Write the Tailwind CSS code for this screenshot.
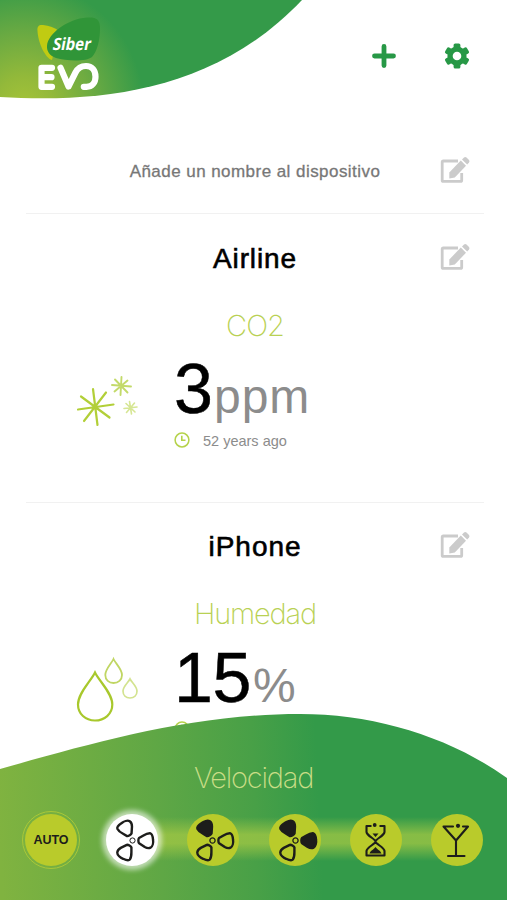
<!DOCTYPE html>
<html lang="es">
<head>
<meta charset="utf-8">
<meta name="viewport" content="width=device-width, initial-scale=1">
<title>Siber EVO</title>
<script src="https://cdn.jsdelivr.net/npm/@tailwindcss/browser@4"></script>
</head>
<body class="bg-white">
<svg class="hidden">
  <defs>
    <symbol id="edit" viewBox="0 0 30 28">
      <path d="M18 5H3.300Q2.200 5 2.200 6.200V24.200Q2.200 25.400 3.300 25.400H20.500Q21.700 25.400 21.700 24.200V17" fill="none" stroke="currentColor" stroke-width="2.800"/>
      <path d="M9.300 16.500L20.800 4.600L26 9.700L14.800 21.500L9.300 22.500Z" fill="currentColor"/>
      <path d="M22 3.400L24 1.500Q25.200.4 26.500 1.500L29 4Q30 5.300 29 6.500L27.200 8.500Z" fill="currentColor"/>
    </symbol>
    <symbol id="clock" viewBox="0 0 16 16">
      <circle cx="8" cy="8" r="6.900" fill="none" stroke="#b5d24a" stroke-width="1.500"/>
      <path d="M7.800 3.800V8.300H11.500" fill="none" stroke="#b5d24a" stroke-width="1.600"/>
    </symbol>
    <path id="blade" d="M6.500-2.500C5.600-1.500 5.700 1.800 6.600 2.700L12.300 6.500C14 7.500 16.300 8 18 7.200C20.200 6 21 2 20.500-1C20.300-3.500 19.700-6.800 17.800-7.200C15.300-7.400 12.500-6 10.500-4.800Z" stroke="#1d1d1b" stroke-width="2.400" stroke-linejoin="round"/>
  </defs>
</svg>
<div class="relative w-[507px] h-[900px] overflow-hidden bg-white font-['Liberation_Sans',Arial,sans-serif]">
  <header class="relative flex h-[127px] items-start">
    <svg class="absolute left-0 top-0" width="310" height="100" viewBox="0 0 310 100">
      <defs>
        <radialGradient id="hg" gradientUnits="userSpaceOnUse" cx="0" cy="0" r="1" gradientTransform="translate(24 108) scale(120 125)">
          <stop offset="0" stop-color="#a6c438"/><stop offset=".25" stop-color="#93b93a"/><stop offset=".6" stop-color="#6aaa42"/><stop offset="1" stop-color="#349a49"/>
        </radialGradient>
      </defs>
      <path d="M0 0H302C215 92 100 103 0 97Z" fill="url(#hg)"/>
    </svg>
    <svg class="relative ml-[34px] mt-[14px]" width="70" height="80" viewBox="34 14 70 80" role="img" aria-label="Siber EVO">
      <path d="M37.500 31C37 26 39 24.500 43 25C49 25.500 55 28 59 31L52 60C45 58 38 42 37.500 31Z" fill="#c0cb12"/>
      <path d="M47 46C48 33 68 19 87 17.500C96 17 100 19 100 28C100 40 97 52 92 57C86 62 66 61 56 58C50 56 46.500 51 47 46Z" fill="#309538"/>
      <text transform="translate(52 50.300) skewX(-11)" textLength="38" lengthAdjust="spacingAndGlyphs" fill="#fff" font-family="Open Sans" font-weight="700" font-size="17">Siber</text>
      <g fill="none" stroke="#fff" stroke-width="6.200" stroke-linecap="round" stroke-linejoin="round">
        <path d="M52 67.800H41.500V86.800H52M41.500 77.200H51.500"/>
        <path d="M60.500 67.800L68.500 86.500L75.500 72.500C78 67.500 82 66 86 66C92 66 95.500 70.500 95.500 76.700C95.500 82.700 92 86.800 86.500 86.800H83.800"/>
      </g>
    </svg>
    <div class="ml-[267px] mt-[43px] flex items-center gap-[47px] text-[#279846]">
      <svg width="26" height="26" viewBox="0 0 26 26"><path d="M13 3.500V22.500M3.500 13H22.500" stroke="currentColor" stroke-width="4.800" stroke-linecap="round"/></svg>
      <svg width="26" height="26" viewBox="-13 -13 26 26"><g fill="currentColor"><circle r="9.600"/><g id="t"><rect x="-3.400" y="-12.600" width="6.800" height="25.200" rx="1.600"/></g><use href="#t" transform="rotate(60)"/><use href="#t" transform="rotate(120)"/></g><circle r="4.300" fill="#fff"/></svg>
    </div>
  </header>

  <main class="pl-[26px] pr-[23px]">
    <section class="relative flex h-[87px] items-center justify-center border-b border-[#f1f1f1]">
      <p class="pt-[3px] text-[17px] leading-[20px] tracking-[0.450px] text-[#777] [-webkit-text-stroke:0.300px_#777]">Añade un nombre al dispositivo</p>
      <svg class="absolute right-[14px] top-[29px] text-[#cbcbcb]" width="30" height="28"><use href="#edit"/></svg>
    </section>

    <section class="relative h-[289px] border-b border-[#f1f1f1]">
      <h2 class="pt-[29px] text-center text-[28px] leading-[32px] tracking-[0.900px] text-black [-webkit-text-stroke:0.600px_#000]">Airline</h2>
      <svg class="absolute right-[14px] top-[29px] text-[#cbcbcb]" width="30" height="28"><use href="#edit"/></svg>
      <p class="mt-[33px] text-center font-['Inter'] text-[29px] leading-[36px] font-[200] tracking-[-1px] text-[#b9d154]">CO2</p>
      <div class="flex pl-[46px]">
        <svg class="mt-[24px] shrink-0" width="70" height="60" viewBox="72 368 70 60" fill="none" stroke-linecap="round">
          <g stroke="#b2cf38" stroke-width="2.200"><path d="M93 389L97.500 425M78 409.500L113.500 404.500M81 396.500L109.500 417.500M106 392.500L84 421"/></g>
          <g stroke="#c3da6a" stroke-width="1.900"><path d="M121.500 377L120.500 395M112 385L131 386.500M115 379.500L127.500 392.500M127.500 380.500L114.500 391.500"/></g>
          <g stroke="#d6e694" stroke-width="1.600"><path d="M129.500 401.500L131.500 414M124 408.500L137 407M126 403.500L135 412M134.500 403L126.500 412.500"/></g>
        </svg>
        <div class="ml-[32px]">
          <p class="flex items-baseline pt-[5px] leading-[80px]"><span class="text-[70px] text-black [-webkit-text-stroke:0.500px_#000]">3</span><span class="ml-px text-[48px] tracking-[1px] text-[#8c8c8c]">ppm</span></p>
          <p class="-mt-[7px] flex items-center"><svg width="16" height="16"><use href="#clock"/></svg><span class="ml-[13px] pt-[3px] text-[14.500px] leading-[16px] text-[#8c8c8c]">52 years ago</span></p>
        </div>
      </div>
    </section>

    <section class="relative h-[289px]">
      <h2 class="pt-[28px] text-center text-[28px] leading-[32px] tracking-[1px] text-black [-webkit-text-stroke:0.600px_#000]">iPhone</h2>
      <svg class="absolute right-[14px] top-[28px] text-[#cbcbcb]" width="30" height="28"><use href="#edit"/></svg>
      <p class="mt-[33px] text-center font-['Inter'] text-[29px] leading-[36px] font-[200] tracking-[-1.200px] text-[#b9d154]">Humedad</p>
      <div class="flex pl-[46px]">
        <svg class="mt-[22px] shrink-0" width="70" height="70" viewBox="72 654 70 70" fill="none">
          <path d="M95 672.500C91 681 78 693 78 704.500C78 714 85.500 720.500 95 720.500C104.500 720.500 112.300 714 112.300 704.500C112.300 693 99 681 95 672.500Z" stroke="#a8c82c" stroke-width="2.200"/>
          <path d="M113.500 659C111.500 663.500 105.300 669 105.300 675C105.300 680 109 683 113.500 683C118.200 683 122 680 122 675C122 669 115.500 663.500 113.500 659Z" stroke="#c0d663" stroke-width="1.800"/>
          <path d="M130 679C128.500 682 123 686.500 123 691C123 695.500 126 698 130 698C134 698 137 695.500 137 691C137 686.500 131.500 682 130 679Z" stroke="#d3e38f" stroke-width="1.700"/>
        </svg>
        <div class="ml-[32px]">
          <p class="flex items-baseline pt-[6px] leading-[80px]"><span class="text-[70px] tracking-[-0.500px] text-black [-webkit-text-stroke:0.500px_#000]">15</span><span class="ml-[2px] text-[48px] text-[#8c8c8c]">%</span></p>
          <p class="-mt-[7px] flex items-center"><svg width="16" height="16"><use href="#clock"/></svg><span class="ml-[13px] pt-[3px] text-[14.500px] leading-[16px] text-[#8c8c8c]">52 years ago</span></p>
        </div>
      </div>
    </section>
  </main>

  <footer class="absolute bottom-0 left-0 h-[187px] w-full">
    <svg class="absolute left-0 top-0" width="507" height="187" viewBox="0 713 507 187">
      <defs>
        <linearGradient id="fg" gradientUnits="userSpaceOnUse" x1="0" y1="840" x2="320" y2="825">
          <stop offset="0" stop-color="#80b340"/><stop offset=".5" stop-color="#5fa745"/><stop offset=".8" stop-color="#48a047"/><stop offset="1" stop-color="#339a49"/>
        </linearGradient>
        <linearGradient id="bar" x1="0" y1="0" x2="0" y2="1">
          <stop offset="0" stop-color="#a3c844" stop-opacity="0"/><stop offset=".4" stop-color="#a3c844" stop-opacity=".75"/><stop offset=".6" stop-color="#a3c844" stop-opacity=".75"/><stop offset="1" stop-color="#a3c844" stop-opacity="0"/>
        </linearGradient>
      </defs>
      <path d="M0 769C90 744 190 714 300 714C375 714 450 737 507 778V900H0Z" fill="url(#fg)"/>
      <rect x="131" y="817" width="326" height="44" fill="url(#bar)"/>
    </svg>
    <h3 class="relative pt-[47px] text-center font-['Inter'] text-[29px] leading-[36px] font-[200] tracking-[-1.200px] text-[#c9dd86]">Velocidad</h3>
    <div class="relative mt-[15px] flex items-center justify-between pl-[22px] pr-[24px]">
      <button class="flex size-[58px] items-center justify-center rounded-full border border-[#a9c838]">
        <span class="flex size-[52px] items-center justify-center rounded-full bg-[#b9cb2b] text-[12.500px] font-bold text-[#1d1d1b]">AUTO</span>
      </button>
      <div class="flex w-[377px] justify-between">
        <button class="size-[52px] rounded-full bg-white shadow-[0_0_5px_4px_rgba(255,255,255,0.600)]">
          <svg width="52" height="52" viewBox="-26.500 -26.500 52 52" fill="none"><circle r="2.600" stroke="#1d1d1b" stroke-width="1"/><use href="#blade"/><use href="#blade" transform="rotate(120)"/><use href="#blade" transform="rotate(-120)"/></svg>
        </button>
        <button class="size-[52px] rounded-full bg-[#b9cb2b]">
          <svg width="52" height="52" viewBox="-25.500 -26.500 52 52" fill="none"><circle r="2.600" stroke="#1d1d1b" stroke-width="1.300"/><use href="#blade"/><use href="#blade" transform="rotate(120)"/><use href="#blade" transform="rotate(-120)" fill="#1d1d1b"/></svg>
        </button>
        <button class="size-[52px] rounded-full bg-[#b9cb2b]">
          <svg width="52" height="52" viewBox="-26.500 -26.500 52 52" fill="none"><circle r="2.600" stroke="#1d1d1b" stroke-width="1.300"/><use href="#blade" fill="#1d1d1b"/><use href="#blade" transform="rotate(120)"/><use href="#blade" transform="rotate(-120)" fill="#1d1d1b"/></svg>
        </button>
        <button class="size-[52px] rounded-full bg-[#b9cb2b]">
          <svg width="52" height="52" viewBox="350 814 52 52" fill="none" stroke="#1d1d1b" stroke-width="2.100" stroke-linejoin="round"><path d="M371.500 826H366.500V832C367 836 375.500 839 375.500 841.500C375.500 844 367 847 366.500 851V855.500H384.500V851C384 847 375.500 844 375.500 841.500C375.500 839 384 836 384.500 832V826H379.500"/><path d="M372.500 833.500H378.500L375.500 837ZM369.500 853.500C371 850 374 849.500 375.500 847C377 849.500 380 850 381.500 853.500Z" fill="#1d1d1b" stroke="none"/><circle cx="374.700" cy="825" r="1.900" fill="#1d1d1b" stroke="none"/></svg>
        </button>
        <button class="size-[52px] rounded-full bg-[#b9cb2b]">
          <svg width="52" height="52" viewBox="431 814 52 52" fill="none" stroke="#1d1d1b" stroke-width="2.100" stroke-linejoin="round" stroke-linecap="round"><path d="M453 826.500H443.500L456 840.500L468 826.500H463M456 840.500V855.500M448 856H464.500"/><circle cx="458" cy="825.800" r="2.100" fill="#1d1d1b" stroke="none"/></svg>
        </button>
      </div>
    </div>
  </footer>
</div>
</body>
</html>
